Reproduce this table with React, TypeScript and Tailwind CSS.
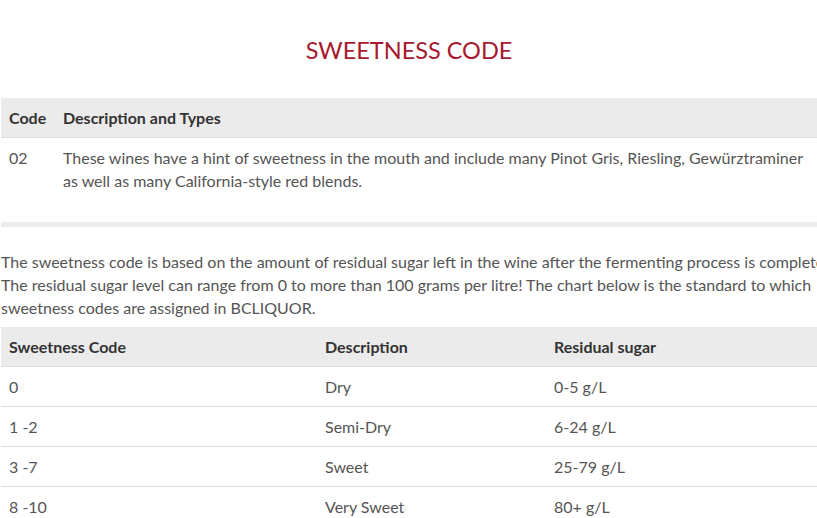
import React from 'react';

type SugarRow = {
  code: string;
  description: string;
  sugar: string;
};

const rows: SugarRow[] = [
  { code: '0', description: 'Dry', sugar: '0-5 g/L' },
  { code: '1 -2', description: 'Semi-Dry', sugar: '6-24 g/L' },
  { code: '3 -7', description: 'Sweet', sugar: '25-79 g/L' },
  { code: '8 -10', description: 'Very Sweet', sugar: '80+ g/L' },
];

export default function App() {
  return (
    <div className="w-[817px] h-[518px] overflow-hidden bg-white font-['Lato',sans-serif] text-[#555] text-[16px]">
      <div className="w-[860px] pl-[1px]">
        {/* Title */}
        <h1 className="w-[816px] pt-[36px] pb-[34px] text-center text-[23.5px] leading-[28px] text-[#a6192e]">
          SWEETNESS CODE
        </h1>

        {/* Code table */}
        <div className="w-[816px] border-b-[5px] border-[#ececec]">
          <div className="grid grid-cols-[62px_1fr] h-[40px] items-center bg-[#ebebeb] border-b border-[#dcdcdc] font-bold text-[#333]">
            <div className="pl-[8px]">Code</div>
            <div>Description and Types</div>
          </div>
          <div className="grid grid-cols-[62px_1fr] pt-[8px] pb-[30px] leading-[23px]">
            <div className="pl-[8px]">02</div>
            <div>
              These wines have a hint of sweetness in the mouth and include many Pinot Gris, Riesling, Gewürztraminer
              <br />
              as well as many California-style red blends.
            </div>
          </div>
        </div>

        {/* Intro text */}
        <p className="pt-[23px] pb-[8px] leading-[23px] whitespace-nowrap">
          The sweetness code is based on the amount of residual sugar left in the wine after the fermenting process is complete.
          <br />
          The residual sugar level can range from 0 to more than 100 grams per litre! The chart below is the standard to which
          <br />
          sweetness codes are assigned in BCLIQUOR.
        </p>

        {/* Sweetness chart */}
        <div className="w-[816px]">
          <div className="grid grid-cols-[316px_229px_1fr] h-[40px] items-center bg-[#ebebeb] border-b border-[#dcdcdc] font-bold text-[#333]">
            <div className="pl-[8px]">Sweetness Code</div>
            <div className="pl-[8px]">Description</div>
            <div className="pl-[8px]">Residual sugar</div>
          </div>
          {rows.map((row) => (
            <div
              key={row.code}
              className="grid grid-cols-[316px_229px_1fr] h-[40px] items-center border-b border-[#dcdcdc]"
            >
              <div className="pl-[8px]">{row.code}</div>
              <div className="pl-[8px]">{row.description}</div>
              <div className="pl-[8px]">{row.sugar}</div>
            </div>
          ))}
        </div>
      </div>
    </div>
  );
}
